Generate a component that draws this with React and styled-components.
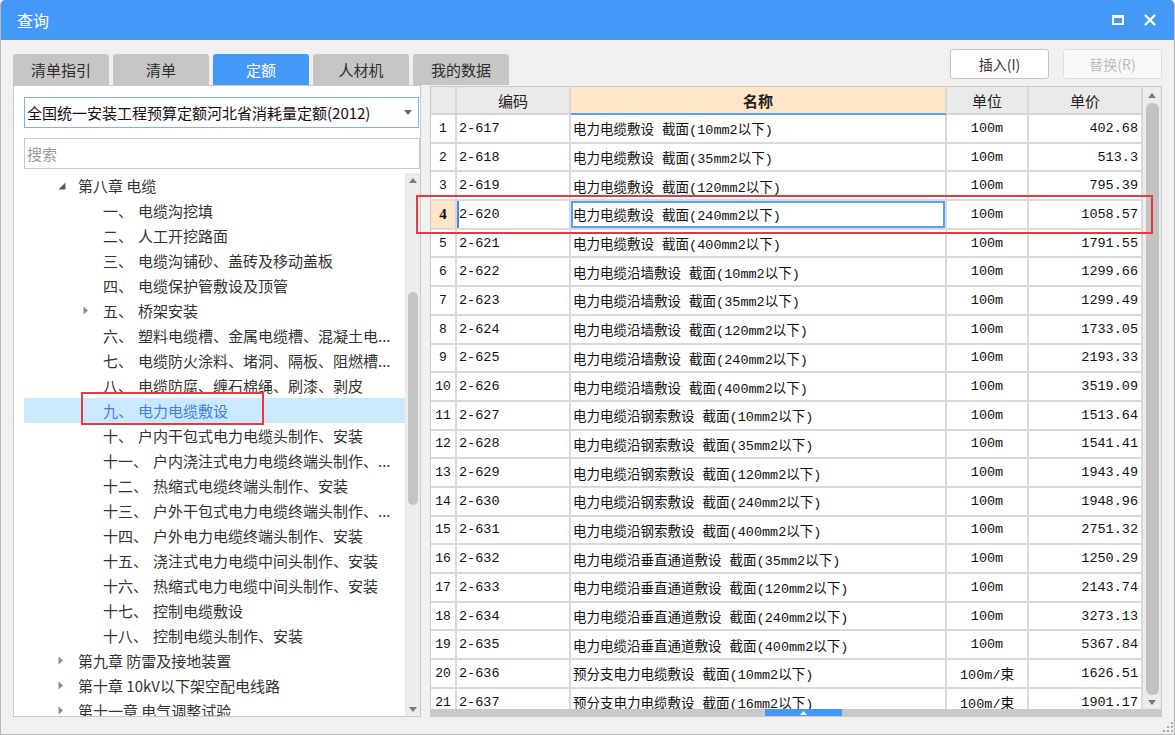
import React from "react";
import styled, { createGlobalStyle } from "styled-components";

const BLUE = "#4499f8";
const CJK = `"Noto Sans CJK SC", "Noto Sans", sans-serif`;
const MONO = `"Liberation Mono", "Noto Sans CJK SC", monospace`;
const COLS = "26px 114px 376px 82px 114px";

const GlobalStyle = createGlobalStyle`
	html, body {
		margin: 0;
		padding: 0;
		background: #fff;
	}
	body {
		font-family: ${CJK};
	}
	* {
		box-sizing: border-box;
	}
`;

const Window = styled.div`
	position: relative;
	width: 1175px;
	height: 735px;
	display: flex;
	flex-direction: column;
	background: #f0f0f0;
	border: 1px solid #b8b8b8;
	border-top: none;
	border-radius: 5px 5px 0 0;
	overflow: hidden;
`;

const TitleBar = styled.div`
	height: 40px;
	flex: none;
	display: flex;
	align-items: center;
	padding: 0 8px 0 16px;
	background: ${BLUE};
	color: #fff;
`;

const Title = styled.div`
	flex: 1;
	font-size: 16px;
	line-height: 1;
`;

const WinButton = styled.div`
	width: 32px;
	height: 32px;
	display: flex;
	align-items: center;
	justify-content: center;
`;

const Toolbar = styled.div`
	height: 45px;
	flex: none;
	display: flex;
	align-items: flex-end;
	padding: 0 12px;
`;

const Tabs = styled.div`
	display: flex;
	gap: 4px;
`;

const Tab = styled.div`
	width: 96px;
	height: 31px;
	display: flex;
	align-items: center;
	justify-content: center;
	border-radius: 3px 3px 0 0;
	background: ${(p) => (p.$active ? BLUE : "#c6c6c6")};
	color: ${(p) => (p.$active ? "#fff" : "#2e2e2e")};
	font-size: 15px;
`;

const Actions = styled.div`
	margin-left: auto;
	align-self: flex-start;
	margin-top: 9px;
	display: flex;
	gap: 14px;
`;

const ActionButton = styled.div`
	width: 99px;
	height: 30px;
	display: flex;
	align-items: center;
	justify-content: center;
	border-radius: 3px;
	font-size: 14px;
	background: ${(p) => (p.$disabled ? "#f9f9f9" : "#fff")};
	border: 1px solid ${(p) => (p.$disabled ? "#dedede" : "#c4c4c4")};
	color: ${(p) => (p.$disabled ? "#bdbdbd" : "#333")};
`;

const Content = styled.div`
	flex: 1;
	min-height: 0;
	display: flex;
	gap: 9px;
	padding: 0 12px;
`;

const LeftPanel = styled.div`
	width: 408px;
	flex: none;
	display: flex;
	flex-direction: column;
	padding: 11px 0 0 10px;
	background: #fff;
	border: 1px solid #c9c9c9;
`;

const Combo = styled.div`
	width: 395px;
	height: 31px;
	flex: none;
	display: flex;
	align-items: center;
	padding: 0 6px 0 2px;
	border: 1px solid #7db3ea;
	font-size: 15px;
	color: #111;
`;

const ComboText = styled.div`
	flex: 1;
`;

const Search = styled.div`
	width: 396px;
	height: 31px;
	flex: none;
	margin-top: 10px;
	display: flex;
	align-items: center;
	padding-left: 2px;
	border: 1px solid #cbcbcb;
	font-size: 15px;
	color: #9a9a9a;
`;

const TreeArea = styled.div`
	flex: 1;
	min-height: 0;
	margin-top: 4px;
	display: flex;
`;

const TreeList = styled.div`
	flex: 1;
	min-width: 0;
	overflow: hidden;
`;

const TreeRow = styled.div`
	height: 25px;
	display: flex;
	align-items: center;
	padding-left: ${(p) => 30 + p.$level * 25}px;
	font-size: 15px;
	white-space: nowrap;
	background: ${(p) => (p.$selected ? "#cce8ff" : "transparent")};
	color: ${(p) => (p.$selected ? "#3b84df" : "#333")};
`;

const Arrow = styled.div`
	width: 24px;
	flex: none;
	display: flex;
	align-items: center;
	padding-left: 4px;
`;

const Label = styled.span`
	flex: none;
	margin-right: 5px;
`;

const VScroll = styled.div`
	width: ${(p) => p.$w}px;
	flex: none;
	display: flex;
	flex-direction: column;
	align-items: center;
	background: #ececec;
`;

const ScrollArrow = styled.div`
	height: ${(p) => p.$h}px;
	flex: none;
	display: flex;
	align-items: center;
	justify-content: center;
`;

const ScrollSpace = styled.div`
	height: ${(p) => p.$h}px;
	flex: none;
`;

const Thumb = styled.div`
	width: ${(p) => p.$w}px;
	height: ${(p) => p.$h}px;
	flex: none;
	border-radius: 6px;
	background: #c3c3c3;
`;

const RightPanel = styled.div`
	width: 732px;
	flex: none;
	display: flex;
	flex-direction: column;
	margin-top: 1px;
	background: #fff;
	border: 1px solid #c9c9c9;
`;

const GridArea = styled.div`
	flex: 1;
	min-height: 0;
	display: flex;
`;

const Table = styled.div`
	width: 712px;
	flex: none;
	overflow: hidden;
`;

const Row = styled.div`
	display: grid;
	grid-template-columns: ${COLS};
	height: ${(p) => (p.$header ? 28 : 28.7)}px;
`;

const HeadCell = styled.div`
	display: flex;
	align-items: center;
	justify-content: center;
	font-size: 15px;
	color: #222;
	font-weight: ${(p) => (p.$active ? 700 : 400)};
	background: ${(p) => (p.$active ? "#fde5c7" : "#e9e9e9")};
	border-right: 2px solid #d6d6d6;
	border-bottom: 2px solid ${(p) => (p.$active ? "#5a9fec" : "#d6d6d6")};
`;

const Cell = styled.div`
	display: flex;
	align-items: center;
	justify-content: ${(p) => p.$align || "flex-start"};
	padding: 0 ${(p) => p.$pad ?? 2}px;
	font-family: ${MONO};
	font-size: 13.5px;
	color: #111;
	white-space: nowrap;
	overflow: hidden;
	background: ${(p) => p.$bg || "#fff"};
	border-right: 2px solid #dadada;
	border-bottom: 2px solid #dadada;
	${(p) => p.$focus && `box-shadow: inset 0 0 0 2px #5aa0ee;`}
	${(p) => p.$marker && `box-shadow: inset 2px 0 0 #3b8de6;`}
`;

const RowNum = styled(Cell)`
	justify-content: center;
	padding: 0;
	font-family: ${(p) => (p.$bold ? `"Liberation Serif", serif` : MONO)};
	font-weight: ${(p) => (p.$bold ? 700 : 400)};
	font-size: ${(p) => (p.$bold ? 15 : 13)}px;
`;

const HBar = styled.div`
	height: 7px;
	flex: none;
	display: flex;
	padding-left: 334px;
	background: #c9c9c9;
`;

const HandleTab = styled.div`
	width: 77px;
	height: 7px;
	display: flex;
	align-items: center;
	justify-content: center;
	background: ${BLUE};
`;

const Footer = styled.div`
	height: 17px;
	flex: none;
	display: flex;
	justify-content: flex-end;
	align-items: flex-end;
	padding: 0 1px 2px 0;
`;

const Annotation = styled.div`
	position: absolute;
	border: 2px solid #e63a3c;
	pointer-events: none;
`;

// the reference truncates long titles with a plain "..."
const tree = [
	{ level: 0, arrow: "open", text: "第八章 电缆" },
	{ level: 1, label: "一、", text: "电缆沟挖填" },
	{ level: 1, label: "二、", text: "人工开挖路面" },
	{ level: 1, label: "三、", text: "电缆沟铺砂、盖砖及移动盖板" },
	{ level: 1, label: "四、", text: "电缆保护管敷设及顶管" },
	{ level: 1, label: "五、", text: "桥架安装", arrow: "closed" },
	{ level: 1, label: "六、", text: "塑料电缆槽、金属电缆槽、混凝土电..." },
	{ level: 1, label: "七、", text: "电缆防火涂料、堵洞、隔板、阻燃槽..." },
	{ level: 1, label: "八、", text: "电缆防腐、缠石棉绳、刷漆、剥皮" },
	{ level: 1, label: "九、", text: "电力电缆敷设", selected: true },
	{ level: 1, label: "十、", text: "户内干包式电力电缆头制作、安装" },
	{ level: 1, label: "十一、", text: "户内浇注式电力电缆终端头制作、..." },
	{ level: 1, label: "十二、", text: "热缩式电缆终端头制作、安装" },
	{ level: 1, label: "十三、", text: "户外干包式电力电缆终端头制作、..." },
	{ level: 1, label: "十四、", text: "户外电力电缆终端头制作、安装" },
	{ level: 1, label: "十五、", text: "浇注式电力电缆中间头制作、安装" },
	{ level: 1, label: "十六、", text: "热缩式电力电缆中间头制作、安装" },
	{ level: 1, label: "十七、", text: "控制电缆敷设" },
	{ level: 1, label: "十八、", text: "控制电缆头制作、安装" },
	{ level: 0, arrow: "closed", text: "第九章 防雷及接地装置" },
	{ level: 0, arrow: "closed", text: "第十章 10kV以下架空配电线路" },
	{ level: 0, arrow: "closed", text: "第十一章 电气调整试验" },
];

const rows = [
	["2-617", "电力电缆敷设 截面(10mm2以下)", "100m", "402.68"],
	["2-618", "电力电缆敷设 截面(35mm2以下)", "100m", "513.3"],
	["2-619", "电力电缆敷设 截面(120mm2以下)", "100m", "795.39"],
	["2-620", "电力电缆敷设 截面(240mm2以下)", "100m", "1058.57"],
	["2-621", "电力电缆敷设 截面(400mm2以下)", "100m", "1791.55"],
	["2-622", "电力电缆沿墙敷设 截面(10mm2以下)", "100m", "1299.66"],
	["2-623", "电力电缆沿墙敷设 截面(35mm2以下)", "100m", "1299.49"],
	["2-624", "电力电缆沿墙敷设 截面(120mm2以下)", "100m", "1733.05"],
	["2-625", "电力电缆沿墙敷设 截面(240mm2以下)", "100m", "2193.33"],
	["2-626", "电力电缆沿墙敷设 截面(400mm2以下)", "100m", "3519.09"],
	["2-627", "电力电缆沿钢索敷设 截面(10mm2以下)", "100m", "1513.64"],
	["2-628", "电力电缆沿钢索敷设 截面(35mm2以下)", "100m", "1541.41"],
	["2-629", "电力电缆沿钢索敷设 截面(120mm2以下)", "100m", "1943.49"],
	["2-630", "电力电缆沿钢索敷设 截面(240mm2以下)", "100m", "1948.96"],
	["2-631", "电力电缆沿钢索敷设 截面(400mm2以下)", "100m", "2751.32"],
	["2-632", "电力电缆沿垂直通道敷设 截面(35mm2以下)", "100m", "1250.29"],
	["2-633", "电力电缆沿垂直通道敷设 截面(120mm2以下)", "100m", "2143.74"],
	["2-634", "电力电缆沿垂直通道敷设 截面(240mm2以下)", "100m", "3273.13"],
	["2-635", "电力电缆沿垂直通道敷设 截面(400mm2以下)", "100m", "5367.84"],
	["2-636", "预分支电力电缆敷设 截面(10mm2以下)", "100m/束", "1626.51"],
	["2-637", "预分支电力电缆敷设 截面(16mm2以下)", "100m/束", "1901.17"],
];

const SELECTED_ROW = 3;

function Tri({ dir, color = "#7a7a7a" }) {
	const d = dir === "up" ? "M0 5 L4 0 L8 5 Z" : "M0 0 L8 0 L4 5 Z";
	return (
		<svg width="8" height="5" viewBox="0 0 8 5">
			<path d={d} fill={color} />
		</svg>
	);
}

function TreeArrow({ type }) {
	if (type === "open") {
		return (
			<svg width="8" height="8" viewBox="0 0 8 8">
				<path d="M7.5 0.5 L7.5 7.5 L0.5 7.5 Z" fill="#5a5a5a" />
			</svg>
		);
	}
	return (
		<svg width="6" height="9" viewBox="0 0 6 9">
			<path d="M0.5 0.5 L5 4.5 L0.5 8.5 Z" fill="#8c8c8c" />
		</svg>
	);
}

function Grip() {
	const dots = [
		[8, 0],
		[4, 4],
		[8, 4],
		[0, 8],
		[4, 8],
		[8, 8],
	];
	return (
		<svg width="10" height="10" viewBox="0 0 10 10">
			{dots.map(([x, y]) => (
				<rect key={`${x}-${y}`} x={x} y={y} width="2" height="2" fill="#a8a8a8" />
			))}
		</svg>
	);
}

export default function App() {
	return (
		<>
			<GlobalStyle />
			<Window>
				<TitleBar>
					<Title>查询</Title>
					<WinButton>
						<svg width="12" height="10" viewBox="0 0 12 10">
							<rect x="1" y="1.5" width="10" height="7.5" fill="none" stroke="#fff" strokeWidth="2" />
							<rect x="0" y="0" width="12" height="3" fill="#fff" />
						</svg>
					</WinButton>
					<WinButton>
						<svg width="12" height="12" viewBox="0 0 12 12">
							<path d="M1 1 L11 11 M11 1 L1 11" stroke="#fff" strokeWidth="2.4" />
						</svg>
					</WinButton>
				</TitleBar>

				<Toolbar>
					<Tabs>
						<Tab>清单指引</Tab>
						<Tab>清单</Tab>
						<Tab $active>定额</Tab>
						<Tab>人材机</Tab>
						<Tab>我的数据</Tab>
					</Tabs>
					<Actions>
						<ActionButton>插入(I)</ActionButton>
						<ActionButton $disabled>替换(R)</ActionButton>
					</Actions>
				</Toolbar>

				<Content>
					<LeftPanel>
						<Combo>
							<ComboText>全国统一安装工程预算定额河北省消耗量定额(2012)</ComboText>
							<Tri dir="down" color="#6a6a6a" />
						</Combo>
						<Search>搜索</Search>
						<TreeArea>
							<TreeList>
								{tree.map((n) => (
									<TreeRow key={n.text} $level={n.level} $selected={n.selected}>
										<Arrow>{n.arrow && <TreeArrow type={n.arrow} />}</Arrow>
										{n.label && <Label>{n.label}</Label>}
										<span>{n.text}</span>
									</TreeRow>
								))}
							</TreeList>
							<VScroll $w={15}>
								<ScrollArrow $h={15}>
									<Tri dir="up" />
								</ScrollArrow>
								<ScrollSpace $h={104} />
								<Thumb $w={10} $h={213} />
								<ScrollSpace $h={197} />
								<ScrollArrow $h={15}>
									<Tri dir="down" />
								</ScrollArrow>
							</VScroll>
						</TreeArea>
					</LeftPanel>

					<RightPanel>
						<GridArea>
							<Table>
								<Row $header>
									<HeadCell />
									<HeadCell>编码</HeadCell>
									<HeadCell $active>名称</HeadCell>
									<HeadCell>单位</HeadCell>
									<HeadCell>单价</HeadCell>
								</Row>
								{rows.map(([code, name, unit, price], i) => {
									const sel = i === SELECTED_ROW;
									return (
										<Row key={code}>
											<RowNum $bold={sel} $bg={sel ? "#fde5c7" : undefined}>
												{i + 1}
											</RowNum>
											<Cell $marker={sel}>{code}</Cell>
											<Cell $focus={sel}>{name}</Cell>
											<Cell $align="center">{unit}</Cell>
											<Cell $align="flex-end" $pad={3}>
												{price}
											</Cell>
										</Row>
									);
								})}
							</Table>
							<VScroll $w={18}>
								<ScrollArrow $h={16}>
									<Tri dir="up" />
								</ScrollArrow>
								<Thumb $w={13} $h={592} />
								<ScrollArrow $h={14}>
									<Tri dir="down" />
								</ScrollArrow>
							</VScroll>
						</GridArea>
						<HBar>
							<HandleTab>
								<svg width="7" height="4" viewBox="0 0 7 4">
									<path d="M0 4 L3.5 0 L7 4 Z" fill="#fff" />
								</svg>
							</HandleTab>
						</HBar>
					</RightPanel>
				</Content>

				<Footer>
					<Grip />
				</Footer>

				<Annotation style={{ left: 80, top: 392, width: 183, height: 33 }} />
				<Annotation style={{ left: 415, top: 195, width: 737, height: 39 }} />
			</Window>
		</>
	);
}
